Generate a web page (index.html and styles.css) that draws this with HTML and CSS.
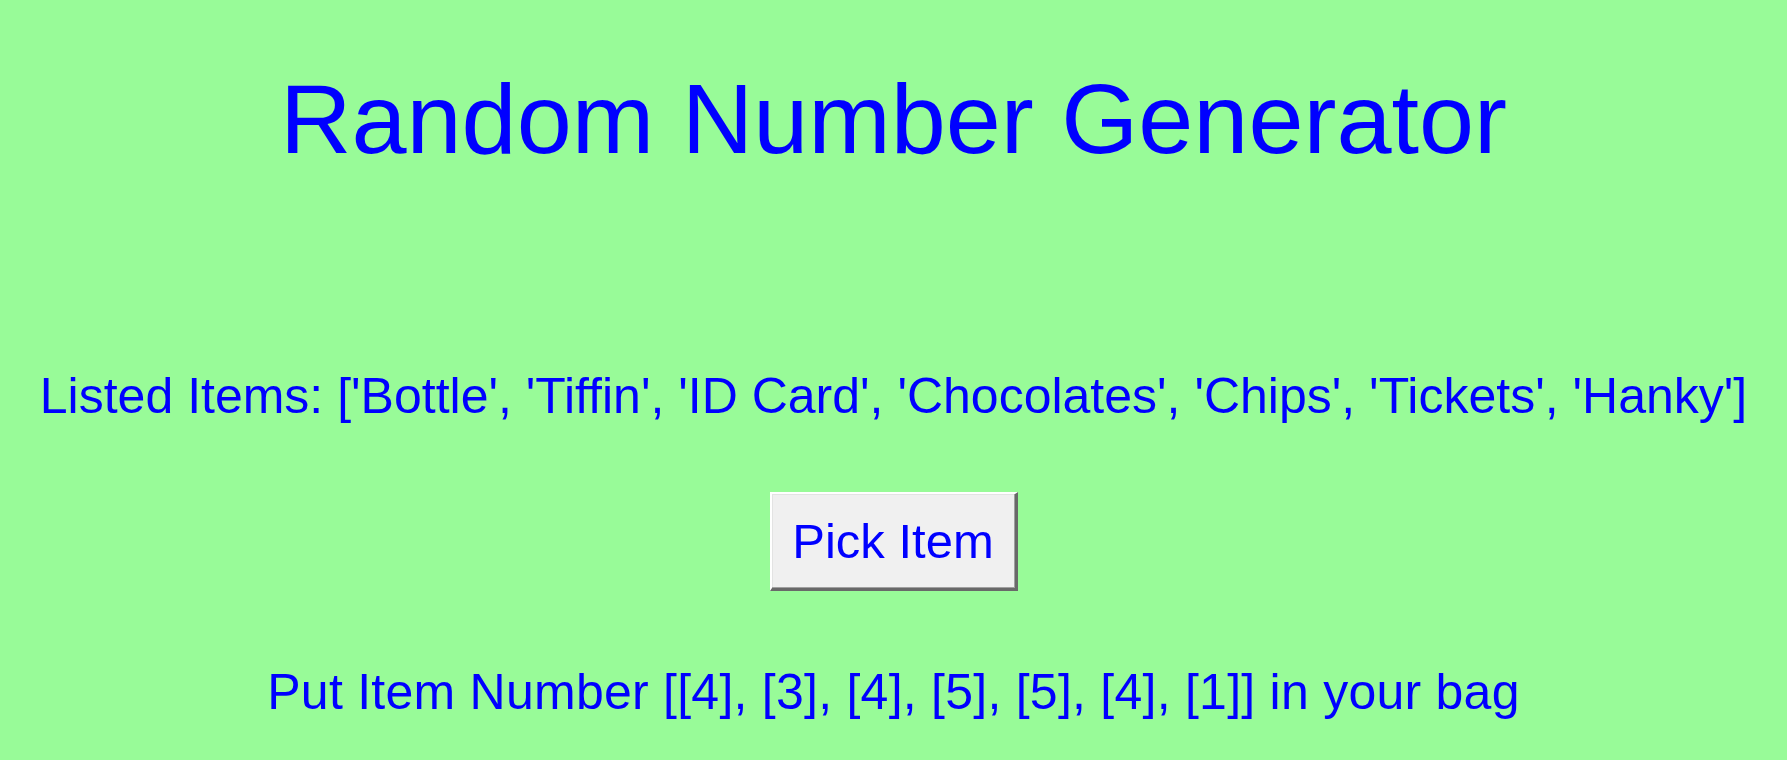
FILE: index.html
```html
<!DOCTYPE html>
<html>
<head>
<meta charset="utf-8">
<link rel="stylesheet" href="styles.css">
</head>
<body>
<main class="app">
  <h1 class="title">Random Number Generator</h1>
  <p class="items">Listed Items: ['Bottle', 'Tiffin', 'ID Card', 'Chocolates', 'Chips', 'Tickets', 'Hanky']</p>
  <button class="pick">Pick Item</button>
  <p class="result">Put Item Number [[4], [3], [4], [5], [5], [4], [1]] in your bag</p>
</main>
</body>
</html>
```
FILE: styles.css
```css
html, body {
  margin: 0;
  padding: 0;
  background: #98fb98;
  height: 100%;
}
.app {
  display: flex;
  flex-direction: column;
  align-items: center;
  padding-top: 59px;
  font-family: "Liberation Sans", Arial, sans-serif;
  color: #0000ff;
}
.title {
  margin: 0;
  font-size: 99px;
  font-weight: normal;
  line-height: 120px;
  white-space: nowrap;
}
.items {
  margin: 186px 0 0;
  font-size: 50px;
  line-height: 62px;
  white-space: nowrap;
}
.pick {
  margin-top: 65px;
  box-sizing: border-box;
  width: 248px;
  height: 99px;
  padding: 0;
  background: #f0f0f0;
  color: #0000ff;
  font-family: "Liberation Sans", Arial, sans-serif;
  font-size: 49px;
  line-height: 62px;
  border-style: solid;
  border-width: 2px 3px 3px 2px;
  border-color: #ffffff #696969 #696969 #ffffff;
  box-shadow: inset -1px -1px 0 #a0a0a0, inset 1px 1px 0 #e3e3e3;
}
.result {
  margin: 70px 0 0;
  font-size: 50px;
  letter-spacing: 0.25px;
  line-height: 62px;
  white-space: nowrap;
}
```
